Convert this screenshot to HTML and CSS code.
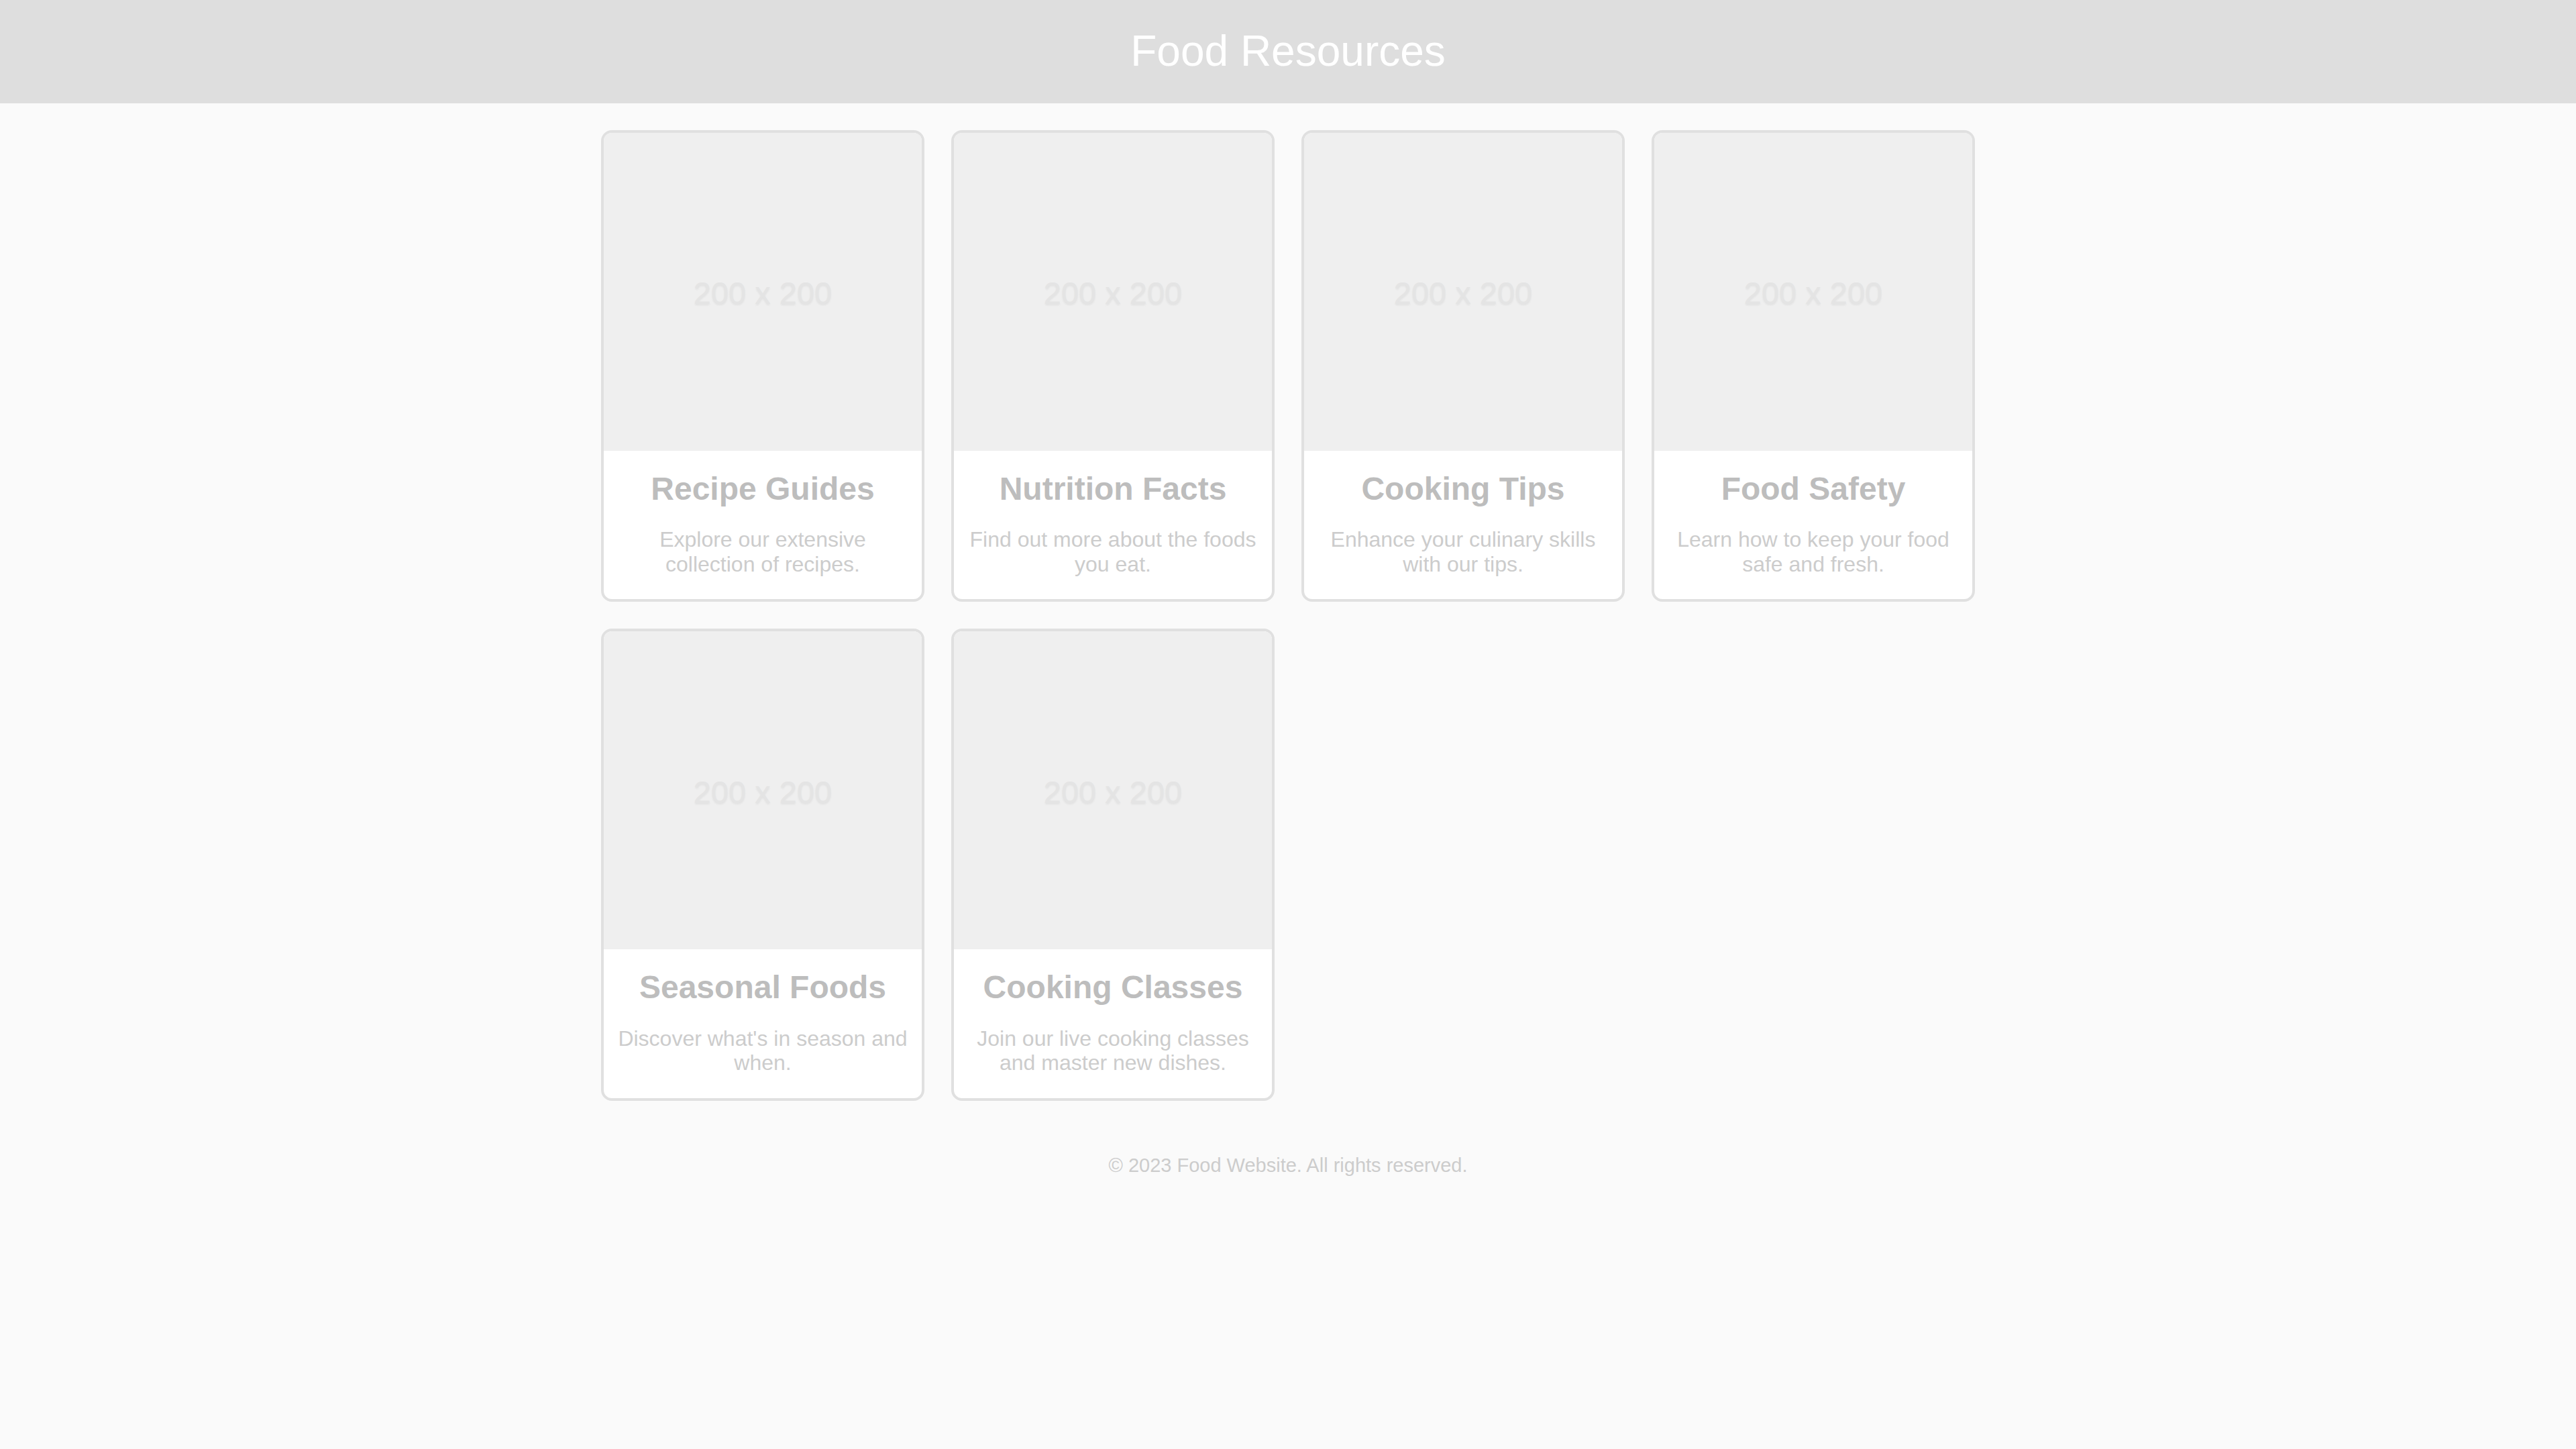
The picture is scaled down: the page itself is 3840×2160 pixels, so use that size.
FILE: index.html
```html
<!DOCTYPE html>
<html lang="en">
<head>
<meta charset="utf-8">
<title>Food Resources</title>
<link rel="stylesheet" href="styles.css">
</head>
<body>
<header class="site-header">
  <h1 class="site-title">Food Resources</h1>
</header>
<main class="grid">
  <article class="card">
    <div class="thumb">200 x 200</div>
    <div class="card-body">
      <h3 class="card-title">Recipe Guides</h3>
      <p class="card-text">Explore our extensive collection of recipes.</p>
    </div>
  </article>
  <article class="card">
    <div class="thumb">200 x 200</div>
    <div class="card-body">
      <h3 class="card-title">Nutrition Facts</h3>
      <p class="card-text">Find out more about the foods you eat.</p>
    </div>
  </article>
  <article class="card">
    <div class="thumb">200 x 200</div>
    <div class="card-body">
      <h3 class="card-title">Cooking Tips</h3>
      <p class="card-text">Enhance your culinary skills with our tips.</p>
    </div>
  </article>
  <article class="card">
    <div class="thumb">200 x 200</div>
    <div class="card-body">
      <h3 class="card-title">Food Safety</h3>
      <p class="card-text">Learn how to keep your food safe and fresh.</p>
    </div>
  </article>
  <article class="card">
    <div class="thumb">200 x 200</div>
    <div class="card-body">
      <h3 class="card-title">Seasonal Foods</h3>
      <p class="card-text">Discover what's in season and when.</p>
    </div>
  </article>
  <article class="card">
    <div class="thumb">200 x 200</div>
    <div class="card-body">
      <h3 class="card-title">Cooking Classes</h3>
      <p class="card-text">Join our live cooking classes and master new dishes.</p>
    </div>
  </article>
</main>
<footer class="site-footer">
  <p class="copyright">&copy; 2023 Food Website. All rights reserved.</p>
</footer>
</body>
</html>
```

FILE: styles.css
```css
html, body {
  margin: 0;
  padding: 0;
}

body {
  background: #fafafa;
  font-family: "Liberation Sans", Arial, sans-serif;
  color: #bbbbbb;
}

.site-header {
  background: #dedede;
  padding: 40px 0;
  text-align: center;
}

.site-title {
  margin: 0;
  font-size: 64px;
  font-weight: normal;
  line-height: 1.15;
  color: #ffffff;
}

.grid {
  width: 2048px;
  margin: 0 auto;
  padding: 40px 0;
  display: grid;
  grid-template-columns: repeat(4, 1fr);
  gap: 40px;
}

.card {
  background: #ffffff;
  border: 4px solid #e0e0e0;
  border-radius: 16px;
  overflow: hidden;
  text-align: center;
}

.thumb {
  aspect-ratio: 1 / 1;
  background: #efefef;
  display: flex;
  align-items: center;
  justify-content: center;
  padding-top: 4px;
  box-sizing: border-box;
  font-size: 47px;
  color: #e4e4e4;
  text-shadow: 0 2px 3px rgba(0, 0, 0, 0.06);
}

.card-body {
  padding: 29px 20px 34px;
}

.card-title {
  margin: 0;
  font-size: 48px;
  line-height: 1.15;
  font-weight: bold;
  color: #bdbdbd;
}

.card-text {
  margin: 30px 0 0;
  font-size: 32px;
  line-height: 1.15;
  color: #cccccc;
}

.site-footer {
  padding: 40px 0;
  text-align: center;
}

.copyright {
  margin: 0;
  font-size: 29px;
  line-height: 1.15;
  color: #cccccc;
}
```
